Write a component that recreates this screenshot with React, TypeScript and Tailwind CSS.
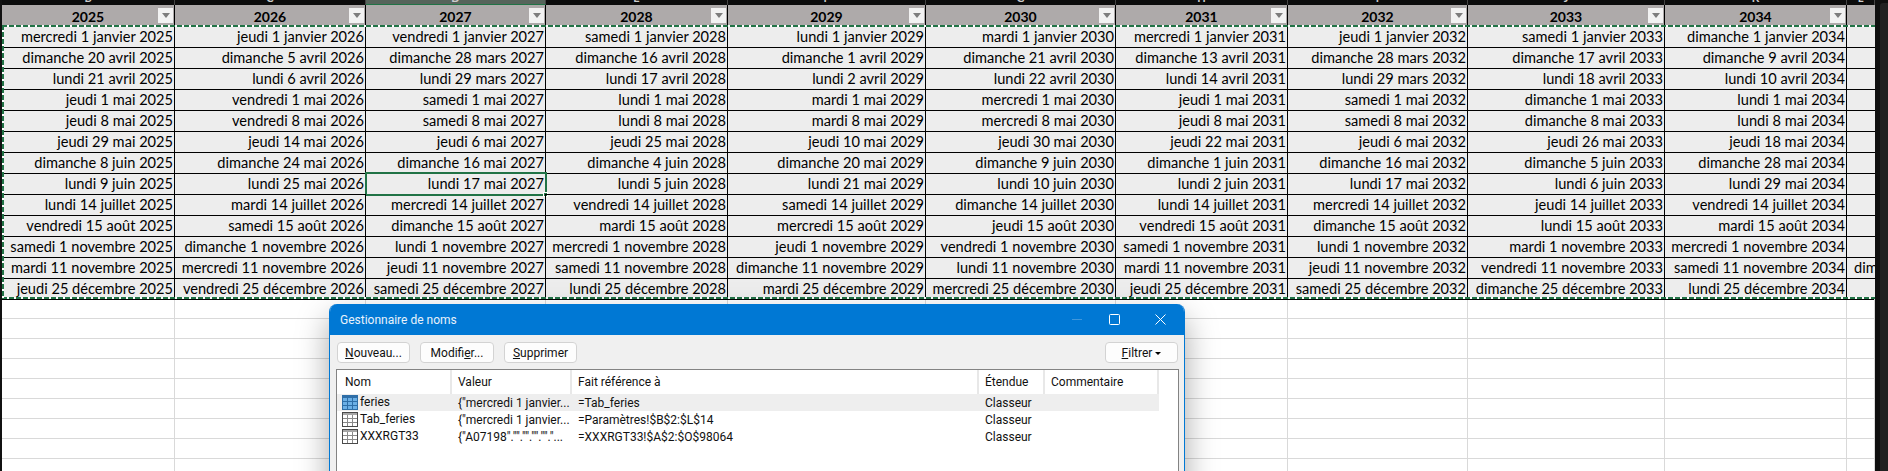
const COLS = "grid grid-cols-[173px_191px_180px_182px_198px_190px_172px_180px_197px_182px_28px]";
const LIST_COLS = "grid w-[822px] grid-cols-[115px_120px_407px_66px_114px]";

const letters = ["B", "C", "D", "E", "F", "G", "H", "I", "J", "K", "L", "M"];
const years = [2025, 2026, 2027, 2028, 2029, 2030, 2031, 2032, 2033, 2034];

const feries: string[][] = [
  ["mercredi 1 janvier", "dimanche 20 avril", "lundi 21 avril", "jeudi 1 mai", "jeudi 8 mai", "jeudi 29 mai", "dimanche 8 juin", "lundi 9 juin", "lundi 14 juillet", "vendredi 15 août", "samedi 1 novembre", "mardi 11 novembre", "jeudi 25 décembre"],
  ["jeudi 1 janvier", "dimanche 5 avril", "lundi 6 avril", "vendredi 1 mai", "vendredi 8 mai", "jeudi 14 mai", "dimanche 24 mai", "lundi 25 mai", "mardi 14 juillet", "samedi 15 août", "dimanche 1 novembre", "mercredi 11 novembre", "vendredi 25 décembre"],
  ["vendredi 1 janvier", "dimanche 28 mars", "lundi 29 mars", "samedi 1 mai", "samedi 8 mai", "jeudi 6 mai", "dimanche 16 mai", "lundi 17 mai", "mercredi 14 juillet", "dimanche 15 août", "lundi 1 novembre", "jeudi 11 novembre", "samedi 25 décembre"],
  ["samedi 1 janvier", "dimanche 16 avril", "lundi 17 avril", "lundi 1 mai", "lundi 8 mai", "jeudi 25 mai", "dimanche 4 juin", "lundi 5 juin", "vendredi 14 juillet", "mardi 15 août", "mercredi 1 novembre", "samedi 11 novembre", "lundi 25 décembre"],
  ["lundi 1 janvier", "dimanche 1 avril", "lundi 2 avril", "mardi 1 mai", "mardi 8 mai", "jeudi 10 mai", "dimanche 20 mai", "lundi 21 mai", "samedi 14 juillet", "mercredi 15 août", "jeudi 1 novembre", "dimanche 11 novembre", "mardi 25 décembre"],
  ["mardi 1 janvier", "dimanche 21 avril", "lundi 22 avril", "mercredi 1 mai", "mercredi 8 mai", "jeudi 30 mai", "dimanche 9 juin", "lundi 10 juin", "dimanche 14 juillet", "jeudi 15 août", "vendredi 1 novembre", "lundi 11 novembre", "mercredi 25 décembre"],
  ["mercredi 1 janvier", "dimanche 13 avril", "lundi 14 avril", "jeudi 1 mai", "jeudi 8 mai", "jeudi 22 mai", "dimanche 1 juin", "lundi 2 juin", "lundi 14 juillet", "vendredi 15 août", "samedi 1 novembre", "mardi 11 novembre", "jeudi 25 décembre"],
  ["jeudi 1 janvier", "dimanche 28 mars", "lundi 29 mars", "samedi 1 mai", "samedi 8 mai", "jeudi 6 mai", "dimanche 16 mai", "lundi 17 mai", "mercredi 14 juillet", "dimanche 15 août", "lundi 1 novembre", "jeudi 11 novembre", "samedi 25 décembre"],
  ["samedi 1 janvier", "dimanche 17 avril", "lundi 18 avril", "dimanche 1 mai", "dimanche 8 mai", "jeudi 26 mai", "dimanche 5 juin", "lundi 6 juin", "jeudi 14 juillet", "lundi 15 août", "mardi 1 novembre", "vendredi 11 novembre", "dimanche 25 décembre"],
  ["dimanche 1 janvier", "dimanche 9 avril", "lundi 10 avril", "lundi 1 mai", "lundi 8 mai", "jeudi 18 mai", "dimanche 28 mai", "lundi 29 mai", "vendredi 14 juillet", "mardi 15 août", "mercredi 1 novembre", "samedi 11 novembre", "lundi 25 décembre"],
];

const names = [
  { nom: "feries", valeur: '{"mercredi 1 janvier...', ref: "=Tab_feries", selected: true },
  { nom: "Tab_feries", valeur: '{"mercredi 1 janvier...', ref: "=Paramètres!$B$2:$L$14", selected: false },
  { nom: "XXXRGT33", valeur: '{"A07198"."".""."".""."...', ref: "=XXXRGT33!$A$2:$O$98064", selected: false },
];

function TableIcon({ selected }: { selected: boolean }) {
  const line = selected ? "#2f6fa8" : "#4a4a4a";
  const fill = selected ? "#6cb0e6" : "#ffffff";
  const band = selected ? "#2f6fa8" : "#a6a6a6";
  return (
    <svg width="16" height="15" viewBox="0 0 16 15" className="shrink-0">
      <rect x="0.5" y="0.5" width="15" height="14" fill={fill} stroke={line} />
      <rect x="1" y="1" width="14" height="2" fill={band} />
      <path d="M5.5 3v11M10.5 3v11M1 6.5h14M1 10.5h14" stroke={selected ? "#2f6fa8" : "#8a8a8a"} fill="none" />
    </svg>
  );
}

function DialogButton({ children, className }: { children: React.ReactNode; className: string }) {
  return (
    <button className={`h-[21px] rounded-[4px] border border-[#d3d3d3] bg-[#fdfdfd] text-[12px] leading-none text-[#111] ${className}`}>
      {children}
    </button>
  );
}

function NameManager() {
  return (
    <div className="absolute left-[329px] top-[304px] h-[220px] w-[856px] overflow-hidden rounded-t-[8px] border-x border-[#0078d4] bg-[#f0f0f0] shadow-[0_14px_32px_rgba(0,0,0,0.35)] font-['Roboto',sans-serif]">
      <div className="flex h-[31px] items-center bg-[#0078d4] pl-[10px] text-[12px] text-[#e8f2fb]">
        <span className="flex-1">Gestionnaire de noms</span>
        <span className="mr-[27px] h-px w-[10px] bg-[#3f97dc]" />
        <svg width="11" height="11" viewBox="0 0 11 11" className="mr-[35px]" fill="none" stroke="#fff">
          <rect x="0.5" y="0.5" width="10" height="10" rx="1" />
        </svg>
        <svg width="11" height="11" viewBox="0 0 11 11" className="mr-[18px]" fill="none" stroke="#fff">
          <path d="M0.5 0.5l10 10M10.5 0.5l-10 10" />
        </svg>
      </div>
      <div className="flex h-[34px] items-start gap-[10px] pl-[7px] pr-[6px] pt-[7px]">
        <DialogButton className="w-[73px]"><u>N</u>ouveau...</DialogButton>
        <DialogButton className="w-[74px]">Modifi<u>e</u>r...</DialogButton>
        <DialogButton className="w-[73px]"><u>S</u>upprimer</DialogButton>
        <DialogButton className="ml-auto flex w-[73px] items-center justify-center gap-[3px]">
          <span><u>F</u>iltrer</span>
          <span className="mt-[1px] h-0 w-0 border-x-[3px] border-t-[3px] border-x-transparent border-t-black" />
        </DialogButton>
      </div>
      <div className="ml-[6px] mr-[5px] h-[200px] border border-[#838383] bg-white text-[12px] text-[#111]">
        <div className={`${LIST_COLS} h-[24px]`}>
          {["Nom", "Valeur", "Fait référence à", "Étendue", "Commentaire"].map((h, i) => (
            <div key={h} className={`flex items-center border-r-2 border-[#e8e8e8] ${i === 0 ? "pl-[8px]" : "pl-[6px]"}`}>
              {h}
            </div>
          ))}
        </div>
        {names.map((n) => (
          <div key={n.nom} className={`${LIST_COLS} h-[17px] items-start leading-[19px] ${n.selected ? "bg-[#eeeeee]" : ""}`}>
            <div className="flex h-[17px] items-center gap-[2px] pl-[5px]">
              <TableIcon selected={n.selected} />
              <span>{n.nom}</span>
            </div>
            <div className="overflow-hidden whitespace-nowrap pl-[6px]">{n.valeur}</div>
            <div className="pl-[6px]">{n.ref}</div>
            <div className="pl-[6px]">Classeur</div>
            <div />
          </div>
        ))}
      </div>
    </div>
  );
}

export default function App() {
  return (
    <div className="relative flex h-[471px] w-[1888px] overflow-hidden bg-white font-['Lato',sans-serif] text-[14.6px] text-black">
      <div className="w-[2px] shrink-0 bg-[#111]" />
      <div className="w-[1873px] shrink-0">
        <div className={`${COLS} h-[5px] overflow-hidden bg-[#0c0c0c]`}>
          {letters.slice(0, 11).map((l) => (
            <div
              key={l}
              className={`h-[5px] border-r border-[#444] text-center text-[11px] font-bold leading-none ${l === "D" ? "border-b border-b-[#217346] bg-[#56645b]" : ""}`}
            >
              <div className="-mt-[8px] text-[#ccc]">{l}</div>
            </div>
          ))}
        </div>
        <div className={`${COLS} h-[21px] bg-[#aeaaaa]`}>
          {years.map((y) => (
            <div key={y} className="relative border-r border-black text-center text-[14px] font-bold leading-[24px]">
              {y}
              <span className="absolute right-[1px] top-[3px] flex h-[15px] w-[15px] items-center justify-center bg-[#f2f2f2]">
                <span className="h-0 w-0 border-x-[4px] border-t-[5px] border-x-transparent border-t-[#7d7d7d]" />
              </span>
            </div>
          ))}
          <div />
        </div>
        {Array.from({ length: 13 }, (_, r) => (
          <div key={r} className={`${COLS} h-[21px] bg-[#ededed]`}>
            {feries.map((col, c) => (
              <div key={c} className="relative whitespace-nowrap border-b border-r border-black pr-[1px] text-right leading-[21px]">
                {col[r]} {years[c]}
                {r === 7 && c === 2 && (
                  <span className="absolute -bottom-[2px] -left-[1px] -right-[2px] -top-[1px] border-2 border-[#217346]">
                    <span className="absolute -bottom-[3px] -right-[3px] h-[5px] w-[5px] border border-white bg-[#217346]" />
                  </span>
                )}
              </div>
            ))}
            <div className="overflow-hidden whitespace-nowrap border-b border-black pl-[7px] leading-[21px]">
              {r === 11 ? "dimanche 11 novembre 2035" : ""}
            </div>
          </div>
        ))}
        {Array.from({ length: 9 }, (_, r) => (
          <div key={r} className={`${COLS} h-[20px]`}>
            {Array.from({ length: 11 }, (_, c) => (
              <div key={c} className="border-b border-r border-[#d9d9d9]" />
            ))}
          </div>
        ))}
      </div>
      <div className="flex flex-1 bg-[#0f0f0f]">
        <div className="w-[5px]" />
        <div className="mt-[3px] flex-1 rounded-tl-[3px] bg-[#222]" />
      </div>

      {/* copy marquee around the table */}
      <div className="absolute left-[2px] top-[25px] h-[2px] w-[1873px] bg-[repeating-linear-gradient(90deg,#217346_0_5px,#fff_5px_7px)]" />
      <div className="absolute left-[2px] top-[297px] h-[2px] w-[1873px] bg-[repeating-linear-gradient(90deg,#217346_0_5px,#fff_5px_7px)]" />
      <div className="absolute left-[2px] top-[25px] h-[274px] w-[2px] bg-[repeating-linear-gradient(180deg,#217346_0_5px,#fff_5px_7px)]" />

      <NameManager />
    </div>
  );
}
